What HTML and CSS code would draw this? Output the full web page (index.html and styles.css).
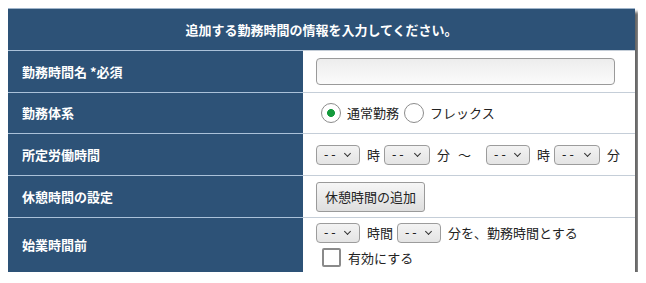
FILE: index.html
```html
<!DOCTYPE html>
<html lang="ja">
<head>
<meta charset="utf-8">
<title>勤務時間の追加</title>
<link rel="stylesheet" href="styles.css">
</head>
<body>
<div class="form-table">
  <div class="caption">追加する勤務時間の情報を入力してください。</div>

  <div class="label r1">勤務時間名 *必須</div>
  <div class="field r1"><input type="text" class="text-input"></div>

  <div class="label r2">勤務体系</div>
  <div class="field r2">
    <label class="choice"><input type="radio" name="kind" class="radio" checked><span>通常勤務</span></label>
    <label class="choice"><input type="radio" name="kind" class="radio"><span>フレックス</span></label>
  </div>

  <div class="label r3">所定労働時間</div>
  <div class="field r3">
    <span class="sel"><select><option>--</option></select></span>
    <span class="unit">時</span>
    <span class="sel sel-w"><select><option>--</option></select></span>
    <span class="unit">分</span>
    <span class="tilde">～</span>
    <span class="sel"><select><option>--</option></select></span>
    <span class="unit">時</span>
    <span class="sel sel-w"><select><option>--</option></select></span>
    <span class="unit">分</span>
  </div>

  <div class="label r4">休憩時間の設定</div>
  <div class="field r4"><button type="button" class="btn">休憩時間の追加</button></div>

  <div class="label r5">始業時間前</div>
  <div class="field field-stack r5">
    <div class="line">
      <span class="sel"><select><option>--</option></select></span>
      <span class="unit">時間</span>
      <span class="sel"><select><option>--</option></select></span>
      <span class="unit">分を、勤務時間とする</span>
    </div>
    <div class="line line-check">
      <label class="choice"><input type="checkbox" class="check"><span>有効にする</span></label>
    </div>
  </div>
</div>
</body>
</html>
```

FILE: styles.css
```css
body {
  margin: 8px;
  background: #ffffff;
  font-family: "Noto Sans CJK JP", "Noto Sans", sans-serif;
  font-size: 13px;
  line-height: 1.2;
  color: #222;
}

.form-table {
  display: grid;
  width: 627px;
  grid-template-columns: 295px 332px;
  grid-template-rows: 42px 42px 41px 42px 42px 55px;
  box-shadow: 4px 4px 3px rgba(0, 0, 0, 0.6);
  background: #fff;
}

.caption {
  grid-column: 1 / 3;
  display: flex;
  align-items: center;
  justify-content: center;
  background: #2d5277;
  color: #fff;
  font-weight: bold;
  border-top: 1px solid #9fb4ca;
  box-sizing: border-box;
}

.label {
  display: flex;
  align-items: center;
  box-sizing: border-box;
  padding-left: 14px;
  background: #2d5277;
  color: #fff;
  font-weight: bold;
  border-top: 1px solid #aac1d9;
}

.field {
  display: flex;
  align-items: center;
  box-sizing: border-box;
  padding-left: 13px;
  border-top: 1px solid #c5ced8;
}

.field-stack {
  flex-direction: column;
  align-items: flex-start;
  justify-content: center;
}

.line {
  display: flex;
  align-items: center;
}

.line-check { margin-top: 5px; padding-left: 6px; }

.text-input {
  display: block;
  box-sizing: border-box;
  width: 299px;
  height: 27px;
  margin: 0;
  border: 1px solid #9a9a9a;
  border-radius: 4px;
  background: linear-gradient(#ededed, #fbfbfb);
  font: inherit;
}

.choice {
  display: inline-flex;
  align-items: center;
}

.radio {
  appearance: none;
  -webkit-appearance: none;
  box-sizing: border-box;
  width: 20px;
  height: 20px;
  margin: 0 6px 0 5px;
  border: 1px solid #8c8c8c;
  border-radius: 50%;
  background: #fff;
}

.radio:checked {
  background: radial-gradient(circle, #149a3c 0 3.6px, #fff 4.3px);
}

.check {
  appearance: none;
  -webkit-appearance: none;
  box-sizing: border-box;
  width: 19px;
  height: 19px;
  margin: 0 7px 0 0;
  border: 2px solid #8a8a8a;
  border-radius: 2px;
  background: #fff;
}

.sel {
  position: relative;
  display: inline-block;
  width: 44px;
  height: 20px;
}

.sel-w { width: 46px; }

.sel select {
  appearance: none;
  -webkit-appearance: none;
  box-sizing: border-box;
  width: 100%;
  height: 100%;
  margin: 0;
  padding: 0 0 0 7px;
  border: 1px solid #9c9c9c;
  border-radius: 4px;
  background: linear-gradient(#f3f3f3, #e4e4e4);
  font-family: "DejaVu Sans", sans-serif;
  font-size: 12px;
  letter-spacing: 3px;
  color: #222;
}

.sel::after {
  content: "";
  position: absolute;
  right: 10px;
  top: 6px;
  width: 4px;
  height: 4px;
  border-right: 1.6px solid #333;
  border-bottom: 1.6px solid #333;
  transform: rotate(45deg);
  pointer-events: none;
}

.unit {
  margin: 0 4px 0 7px;
  color: #222;
}

.tilde {
  margin: 0 15px 0 4px;
}

.btn {
  box-sizing: border-box;
  height: 30px;
  padding: 0 8px;
  border: 1px solid #9a9a9a;
  border-radius: 3px;
  background: linear-gradient(#f6f6f6, #dedede);
  font-family: inherit;
  font-size: 13px;
  color: #222;
}
```
